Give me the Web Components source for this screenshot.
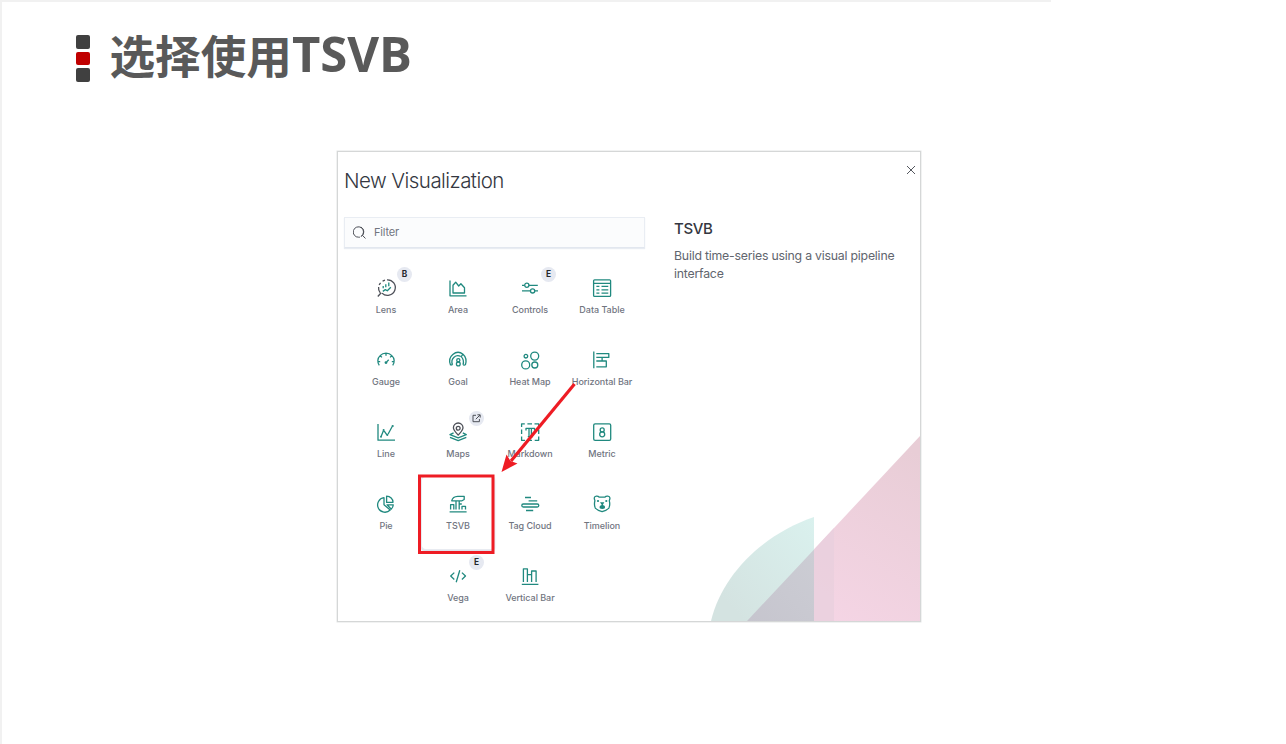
<!DOCTYPE html>
<html lang="zh">
<head>
<meta charset="utf-8">
<title>选择使用TSVB</title>
<style>
body { margin: 0; background: #fff; overflow: hidden; }
</style>
</head>
<body>
<slide-page>
  <slide-heading slot="heading">选择使用<span>TSVB</span></slide-heading>
  <vis-dialog></vis-dialog>
</slide-page>

<script>
const define = (name, html) => customElements.define(name, class extends HTMLElement {
  connectedCallback() {
    if (this.shadowRoot) return;
    const root = this.attachShadow({ mode: 'open' });
    const t = document.createElement('template');
    t.innerHTML = typeof html === 'function' ? html(this) : html;
    root.append(t.content.cloneNode(true));
  }
});

const ICONS = {
  lens: `<g stroke="#4d5058"><path d="M3.1 13.6A7.6 7.6 0 0 1 1.600 8M2.200 6A7.600 7.600 0 0 1 3.600 3.900M5.6 2.3A7.8 7.8 0 0 1 8 1.1M10 .8a7.8 7.8 0 1 1-5 13.3M4.2 13.8.8 17.5"/></g><path d="M6.2 9.300V6.900M8.8 8.300V5.2M11.8 7.3V3.6M5.800 12.4l2.5-1.8 2 1.2 3.5-3.6"/>`,
  area: `<path d="M1 1.5V16.8h16.5M4 14V6.2l2.7-3 3 3.8 2.2-2.2 3.6 4V14Z"/>`,
  controls: `<path d="M1 6.3h2.6M8 6.3h8.8M1 11.9h8.3M14 11.9h3"/><circle cx="5.8" cy="6.3" r="2.1"/><circle cx="11.6" cy="11.9" r="2.1"/>`,
  table: `<rect x=".6" y=".8" width="17" height="16.6" rx="1"/><path d="M.6 4.3h17M3.4 7.3h3M8.5 7.3h6.8M3.4 10.8h3M8.5 10.8h6.8M3.4 14.2h3M8.5 14.2h6.8"/>`,
  gauge: `<path d="M2.3 14.3C.1 11.5.4 7.2 3.1 4.6a8.3 8.3 0 0 1 11.8 0c2.7 2.6 3 6.9.8 9.7M9 2.2v2.5M3.3 4.8l1.6 1.6M14.7 4.8l-1.6 1.6M.9 10.7h2.3M14.8 10.7h2.3M9.7 10.9l2-2.1"/><circle cx="9" cy="11.6" r=".8" fill="currentColor"/>`,
  goal: `<path d="M1.6 14.2C-.2 10 .7 5.9 3.8 3.4S11 .8 14 3.2M3.5 13.7C2.3 10.7 3 8 5 6.2s4.6-2 6.8-.7M12.2 5.6 14 3.2c3.2 2.8 3.6 6.6 2.4 10.6M14 13.8c.9-3 .4-6-1.8-8.2M1.6 14.2l1.9-.5M14 13.8l2.4.3"/><circle cx="9.3" cy="9.3" r="1.6"/><circle cx="9.3" cy="12.9" r="1.9"/>`,
  heat: `<circle cx="4.9" cy="5.2" r="1.8"/><circle cx="13.7" cy="5.1" r="4"/><circle cx="4.7" cy="13.9" r="4"/><circle cx="13.8" cy="14" r="3"/>`,
  hbar: `<path d="M.8.5v16.8M3.3 2.6h12.5v3.8H3.3M3.3 10h5.8M9.1 6.5v3.7M3.3 15.8h10V10H9"/>`,
  line: `<path d="M1 1v16.2h17M4.2 13.3l2.2-5.6M7.1 7.8l2.8 4.1M11 11.2l4.2-7.7"/><g fill="currentColor" stroke="none"><circle cx="4" cy="13.7" r="1"/><circle cx="6.6" cy="7" r="1"/><circle cx="10.3" cy="12.1" r="1"/><circle cx="15.7" cy="3" r="1.1"/></g>`,
  maps: `<path d="M4.6 9.9 1 11.7l8.2 3.2 8.1-3.2-3.5-1.8M1 14.4l8.2 3.3 8.1-3.3"/><g stroke="#4d5058" fill="#fff"><path d="M9.2 12.1C6.4 9 4.4 7.2 4.4 4.8a4.8 4.8 0 0 1 9.6 0c0 2.4-2 4.2-4.8 7.3Z"/><circle cx="9.2" cy="5.2" r="1.9"/></g>`,
  markdown: `<path d="M.6 4V.8h3.2M6.4.8H11M13.5.8h4.2V4M17.7 6.5V11M17.7 13.5v3.8h-4M11 17.3H6.5M4 17.3H.6v-3.7M.6 11V6.6M5 7.5V5.3h8.5v2.2M8 5.3v8.5M10.4 5.3v8.5M6.8 13.6h5"/>`,
  metric: `<rect x=".7" y=".8" width="17" height="16.5" rx="1.4"/><circle cx="9.2" cy="6.9" r="2"/><circle cx="9.2" cy="11.3" r="2.5"/>`,
  pie: `<path d="M7 2.7A7.3 7.3 0 1 0 13.2 15L7 9.7ZM9.6 1.2v6.2l6.4-.1C16 4 13.3 1.3 9.6 1.2ZM10.1 9.8h6.2a7 7 0 0 1-2 4.3Z"/>`,
  tsvb: `<path d="M.6 16.9h17M1.6 14.6V9.700h3.2v4.900M7 14.6V6.100M10.2 14.600V6.100M13 14.6v-3.300h3.5v3.3M2.7 5.800C3.4 2.7 5.4 1.4 8.7 1.3h6.500v3.2l-2.200 1.300ZM10.200 9h2.600"/>`,
  cloud: `<path d="M4 2.5h6M7.6 5.8h8.6M5 15.5h7.2"/><rect x=".8" y="9" width="17" height="3" rx="1.5"/>`,
  timelion: `<path d="M6.3 2.2h5.5c1.5-1.6 4.8-1.3 5.1.7.2 1.3-.6 2-.6 3 .7 2.4.5 5-.4 7.2-1.2 1.3-3.6 2.7-6.8 3.6-3.2-.9-5.6-2.3-6.8-3.6-.9-2.2-1.1-4.8-.4-7.2 0-1-.8-1.7-.6-3 .3-2 3.5-2.3 5-.7Z"/><g fill="currentColor" stroke="none"><circle cx="5" cy="6" r="1.1"/><circle cx="13.3" cy="6" r="1.1"/><path d="M7 7.300h4.300l-1.500 2.800c2 .5 2.5 1.400 2.100 3.100-1.400 1.100-3.800 1.100-5.200 0-.4-1.700.2-2.600 2.100-3.100Z"/></g>`,
  vega: `<path d="M5.3 5.6 1.7 9l3.6 3.5M12.9 5.6 16.5 9l-3.6 3.5M10.8 3.2 7.2 15.2"/>`,
  vbar: `<path d="M.8 17.3h16.6M2.4 15V1.8h4V15M6.4 7.7h4.2V15M10.6 9.5V4h4.5v11"/>`
};

define('slide-page', `
<style>
:host { display: flex; flex-direction: column; align-items: flex-start; box-sizing: border-box; width: 1286px; height: 744px;
  border-left: 2px solid #f1f1f1; background: #fff; }
.rule { width: 1049px; height: 2px; background: #f1f1f1; flex: none; }
.head { margin: 24px 0 0 74px; height: 60px; }
.body { margin: 65px 0 0 335px; }
</style>
<div class="rule"></div>
<div class="head"><slot name="heading"></slot></div>
<div class="body"><slot></slot></div>`);

define('slide-heading', `
<style>
:host { display: flex; align-items: center; height: 60px; }
.marks { display: grid; gap: 3px; margin-top: 5px; }
i { width: 14px; height: 13.7px; border-radius: 2px; background: #404040; }
i:nth-child(2) { background: #c00000; }
h1 { margin: 0 0 0 19.5px; font: 700 45.6px/60px "Open Sans", "Noto Sans CJK SC", sans-serif; color: #595959; white-space: nowrap; }
::slotted(span) { font-size: 49px; line-height: 1; position: relative; top: -2px; }
</style>
<div class="marks"><i></i><i></i><i></i></div>
<h1><slot></slot></h1>`);

define('vis-icon', el => `
<style>
:host { display: block; width: 18px; height: 18px; color: #20897f; }
svg { display: block; overflow: visible; }
</style>
<svg width="18" height="18" viewBox="0 0 18 18" fill="none" stroke="currentColor" stroke-width="1.3" stroke-linejoin="round">${ICONS[el.getAttribute('name')]}</svg>`);

define('vis-badge', el => `
<style>
:host { display: flex; align-items: center; justify-content: center; width: 15px; height: 15px; border-radius: 50%;
  background: #e6e9f1; color: #25272d; font: 700 8.3px/15px Inter, sans-serif; }
svg { display: block; }
</style>${el.hasAttribute('link')
  ? '<svg width="9" height="9" viewBox="0 0 9 9" fill="none" stroke="#4d5058"><path d="M4 1.3H1v6.4h6.4V5M5.4.8h2.8v2.8M8 1 3.8 5.2"/></svg>'
  : '<slot></slot>'}`);

define('vis-tile', el => `
<style>
:host { display: flex; flex-direction: column; align-items: center; box-sizing: border-box; position: relative; width: 72px; height: 72px; padding-top: 18px; }
:host([selected]) { border-radius: 3px; box-shadow: 0 0 0 1px #e8ebf1, 0 1px 2px 1px #d3dae6; }
.label { margin-top: 6px; font: 500 9px/14px Inter, sans-serif; letter-spacing: -.04px; color: #71757f; white-space: nowrap; }
::slotted(vis-badge) { position: absolute; left: 47px; top: 6px; }
</style>
<vis-icon name="${el.getAttribute('icon')}"></vis-icon><div class="label">${el.getAttribute('label')}</div><slot></slot>`);

define('filter-field', `
<style>
:host { display: flex; align-items: center; box-sizing: border-box; width: 301px; height: 31px; padding-left: 8px; gap: 8px;
  border: 1px solid #e9edf3; border-bottom-color: #e2e7ef; box-shadow: 0 1px 1px #e8ecf2; background: #fbfcfd; font: 400 11px/16px Inter, sans-serif; letter-spacing: -.2px; color: #71757f; }
</style>
<svg width="13" height="13" viewBox="0 0 13 13" fill="none" stroke="#4d5058" stroke-linecap="round"><path d="M6.5 11.2H5.7A5.2 5.2 0 1 1 8.5 10.2M9.6 9.5 12.2 12.2"/><path d="M8.5 10.2A5.2 5.2 0 0 0 8.2 1.2"/></svg>
<slot></slot>`);

define('art-work', `
<style>:host { display: block; width: 210px; height: 186px; overflow: hidden; } svg { display: block; }</style>
<svg width="211" height="186" viewBox="0 0 211 186">
<defs>
<linearGradient id="p" gradientUnits="userSpaceOnUse" x1="110" y1="186" x2="211" y2="20"><stop offset="0" stop-color="#f5d5e5"/><stop offset="1" stop-color="#e8cdd6"/></linearGradient>
<linearGradient id="g" gradientUnits="userSpaceOnUse" x1="15" y1="165" x2="105" y2="85"><stop offset="0" stop-color="#d4e3e1"/><stop offset="1" stop-color="#daf1ee"/></linearGradient>
<linearGradient id="o" x1="0" y1="1" x2="1" y2="0"><stop offset="0" stop-color="#c6c5ce"/><stop offset="1" stop-color="#cccdd4"/></linearGradient>
</defs>
<path d="M37 186 211 0V186Z" fill="url(#p)"/>
<path d="M104 114.500 124 93V186H104Z" fill="#e9d0dd" fill-opacity=".8"/>
<path d="M1 186C12 139 54 99 104 82V186Z" fill="url(#g)"/>
<path d="M37 186 104 114.500V186Z" fill="url(#o)"/>
</svg>`);

define('vis-dialog', `
<style>
:host { display: grid; grid-template-columns: 336px 1fr; grid-template-rows: 64px 1fr; box-sizing: border-box; position: relative;
  width: 584px; height: 471px; border: 1px solid #d5d7d7; box-shadow: 0 0 0 .5px #e3e5e5; background: #fff; font-family: Inter, sans-serif; }
h2 { margin: 14px 0 0 6px; font: 300 20.5px/30px Inter, sans-serif; letter-spacing: -.55px; color: #343741; }
.close { justify-self: end; margin: 14px 5.5px 0 0; width: 8px; height: 8px; }
.close svg { display: block; }
.left { padding: .5px 0 0 6px; }
.tiles { display: flex; flex-wrap: wrap; justify-content: center; width: 288px; margin: 13.5px 0 0 6px; }
.right { display: flex; flex-direction: column; align-items: flex-end; min-height: 0; }
.info { align-self: stretch; flex: 1; }
h3 { margin: 3px 0 0; font: 500 15px/20px Inter, sans-serif; letter-spacing: -.35px; color: #343741; }
p { margin: 8px 0 0; width: 240px; font: 400 12.3px/18px Inter, sans-serif; letter-spacing: -.22px; color: #61656e; }
.overlay { position: absolute; left: 80px; top: 230px; pointer-events: none; }
</style>
<h2>New Visualization</h2>
<div class="close"><svg width="8" height="8" viewBox="0 0 8 8" stroke="#55585f"><path d="M0 0 8 8M8 0 0 8"/></svg></div>
<div class="left">
  <filter-field>Filter</filter-field>
  <div class="tiles">
    <vis-tile icon="lens" label="Lens"><vis-badge>B</vis-badge></vis-tile>
    <vis-tile icon="area" label="Area"></vis-tile>
    <vis-tile icon="controls" label="Controls"><vis-badge>E</vis-badge></vis-tile>
    <vis-tile icon="table" label="Data Table"></vis-tile>
    <vis-tile icon="gauge" label="Gauge"></vis-tile>
    <vis-tile icon="goal" label="Goal"></vis-tile>
    <vis-tile icon="heat" label="Heat Map"></vis-tile>
    <vis-tile icon="hbar" label="Horizontal Bar"></vis-tile>
    <vis-tile icon="line" label="Line"></vis-tile>
    <vis-tile icon="maps" label="Maps"><vis-badge link></vis-badge></vis-tile>
    <vis-tile icon="markdown" label="Markdown"></vis-tile>
    <vis-tile icon="metric" label="Metric"></vis-tile>
    <vis-tile icon="pie" label="Pie"></vis-tile>
    <vis-tile icon="tsvb" label="TSVB" selected></vis-tile>
    <vis-tile icon="cloud" label="Tag Cloud"></vis-tile>
    <vis-tile icon="timelion" label="Timelion"></vis-tile>
    <vis-tile icon="vega" label="Vega"><vis-badge>E</vis-badge></vis-tile>
    <vis-tile icon="vbar" label="Vertical Bar"></vis-tile>
  </div>
</div>
<div class="right">
  <div class="info">
    <h3>TSVB</h3>
    <p>Build time-series using a visual pipeline interface</p>
  </div>
  <art-work></art-work>
</div>
<svg class="overlay" width="160" height="174" viewBox="418 382 160 174">
  <rect x="419.500" y="476" width="73.500" height="76.500" fill="none" stroke="#ee1c24" stroke-width="3"/>
  <path d="M574.500 384 511 461" stroke="#ee1c24" stroke-width="3.200"/>
  <path d="M501.500 472 506.500 454.500 510.500 461 517.500 463.500Z" fill="#ee1c24"/>
</svg>`);
</script>
</body>
</html>
